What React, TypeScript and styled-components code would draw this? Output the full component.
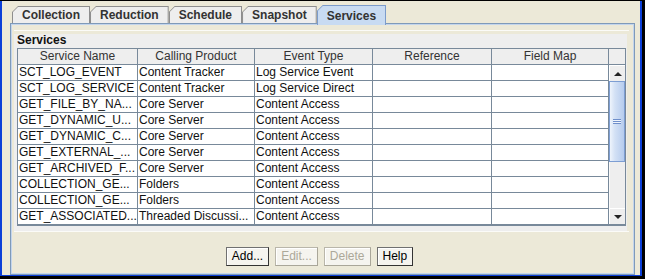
import React from 'react'
import styled, { createGlobalStyle } from 'styled-components'

const GlobalStyle = createGlobalStyle`
  html, body {
    margin: 0;
    padding: 0;
    background: #ece9d8;
  }
  body {
    font-family: "Liberation Sans", Arial, sans-serif;
  }
`

const GRID = '#78899a'

const Window = styled.div`
  width: 645px;
  height: 279px;
  box-sizing: border-box;
  border-top: 1px solid #000;
  border-right: 3px solid #000;
  border-bottom: 3px solid #000;
  background: #ece9d8;
`

const Frame = styled.div`
  height: 100%;
  box-sizing: border-box;
  border-left: 2px solid #0b3fd8;
  border-right: 2px solid #0b3fd8;
  border-bottom: 1px solid #0b3fd8;
  padding: 4px 5px 0 8px;
  display: flex;
  flex-direction: column;
`

const TabRow = styled.div`
  display: flex;
  align-items: flex-end;
  height: 18px;
  padding-left: 2px;
`

const Tab = styled.div<{ $active?: boolean }>`
  position: relative;
  z-index: ${p => (p.$active ? 1 : 0)};
  height: ${p => (p.$active ? 20 : 17)}px;
  margin-bottom: ${p => (p.$active ? -2 : 0)}px;
  box-sizing: border-box;
  padding: 1px 1px 0 1px;
  background: ${p => (p.$active ? '#7c9ccb' : '#8e8e8e')};
  clip-path: polygon(0 6px, 6px 0, 100% 0, 100% 100%, 0 100%);
`

const TabFace = styled.div<{ $active?: boolean }>`
  height: 100%;
  box-sizing: border-box;
  padding: 0 9px;
  display: flex;
  align-items: center;
  background: ${p => (p.$active ? '#c8dbf2' : '#eeeeee')};
  clip-path: polygon(0 5px, 5px 0, 100% 0, 100% 100%, 0 100%);
  font-size: 12px;
  font-weight: bold;
  color: #333;
  white-space: nowrap;
`

const Panel = styled.div`
  flex: 1;
  box-sizing: border-box;
  border: 1px solid #7f9ab9;
  box-shadow: inset 1px 1px 0 #c3d5ec, inset -1px -1px 0 #c3d5ec;
  padding: 6px 5px 0 3px;
  display: flex;
  flex-direction: column;
`

const GroupArea = styled.div`
  border-top: 1px solid #fbfbf8;
  border-bottom: 1px solid #fbfbf8;
  padding-top: 3px;
`

const GroupBox = styled.div`
  margin-right: 2px;
  background: #eeeeee;
  padding: 0 1px 5px 3px;
`

const GroupTitle = styled.div`
  height: 14px;
  line-height: 13px;
  font-size: 12px;
  font-weight: bold;
  color: #111;
`

const Table = styled.div`
  border: 1px solid ${GRID};
  border-bottom-width: 2px;
  background: #fff;
`

const HeaderRow = styled.div`
  display: flex;
  height: 15px;
  border-bottom: 1px solid ${GRID};
  background: #eeeeee;
`

const HeaderCell = styled.div<{ $w: number }>`
  width: ${p => p.$w}px;
  box-sizing: border-box;
  border-right: 1px solid ${GRID};
  font-size: 12px;
  line-height: 14px;
  color: #333;
  text-align: center;
  white-space: nowrap;
  overflow: hidden;
`

const Corner = styled.div`
  width: 16px;
  background: #eeeeee;
`

const Body = styled.div`
  display: flex;
`

const Rows = styled.div`
  display: flex;
  flex-direction: column;
`

const Row = styled.div`
  display: flex;
  height: 16px;
  box-sizing: border-box;
  border-bottom: 1px solid ${GRID};
  &:last-child {
    border-bottom: none;
    height: 15px;
  }
`

const Cell = styled.div<{ $w: number }>`
  width: ${p => p.$w}px;
  box-sizing: border-box;
  border-right: 1px solid ${GRID};
  padding: 0 1px;
  font-size: 12px;
  line-height: 15px;
  color: #111;
  white-space: nowrap;
  overflow: hidden;
`

const ScrollBar = styled.div`
  width: 16px;
  display: flex;
  flex-direction: column;
  background: #eeeeee;
`

const ArrowButton = styled.div<{ $down?: boolean }>`
  height: 16px;
  box-sizing: border-box;
  border-top: 1px solid #fff;
  border-left: 1px solid #fff;
  display: flex;
  align-items: center;
  justify-content: center;
  background: #eeeeee;
  &::after {
    content: '';
    width: 0;
    height: 0;
    border-left: 4px solid transparent;
    border-right: 4px solid transparent;
    ${p => (p.$down ? 'border-top: 4px solid #222;' : 'border-bottom: 4px solid #222;')}
  }
`

const Thumb = styled.div`
  height: 81px;
  box-sizing: border-box;
  border: 1px solid #7d9ed3;
  background: linear-gradient(90deg, #eef4fc 0%, #d3e1f5 35%, #b6ccee 100%);
  display: flex;
  align-items: center;
  justify-content: center;
`

const Grip = styled.div`
  width: 8px;
  height: 5px;
  background: repeating-linear-gradient(180deg, #6f8fcb 0 1px, #eef4fc 1px 2px);
`

const Track = styled.div`
  flex: 1;
  border-left: 1px solid #fafafa;
  background: #eeeeee;
`

const ButtonRow = styled.div`
  display: flex;
  justify-content: center;
  gap: 6px;
  margin-top: 15px;
  padding-right: 4px;
`

const Button = styled.button<{ $disabled?: boolean }>`
  height: 19px;
  box-sizing: border-box;
  padding: 0 5px;
  margin: 0;
  font-family: "Liberation Sans", Arial, sans-serif;
  font-size: 12px;
  line-height: 15px;
  color: ${p => (p.$disabled ? '#aca899' : '#000')};
  background: #f5f4ef;
  border: 1px solid ${p => (p.$disabled ? '#b9b6aa' : '#707070')};
  border-right-color: ${p => (p.$disabled ? '#a9a699' : '#333')};
  border-bottom-color: ${p => (p.$disabled ? '#a9a699' : '#333')};
  box-shadow: inset 1px 1px 0 #fff;
  border-radius: 0;
`

const COLUMNS: Array<{ title: string, width: number }> = [
  { title: 'Service Name', width: 120 },
  { title: 'Calling Product', width: 117 },
  { title: 'Event Type', width: 118 },
  { title: 'Reference', width: 119 },
  { title: 'Field Map', width: 117 },
]

const SERVICES: Array<[string, string, string]> = [
  ['SCT_LOG_EVENT', 'Content Tracker', 'Log Service Event'],
  ['SCT_LOG_SERVICE', 'Content Tracker', 'Log Service Direct'],
  ['GET_FILE_BY_NA...', 'Core Server', 'Content Access'],
  ['GET_DYNAMIC_U...', 'Core Server', 'Content Access'],
  ['GET_DYNAMIC_C...', 'Core Server', 'Content Access'],
  ['GET_EXTERNAL_...', 'Core Server', 'Content Access'],
  ['GET_ARCHIVED_F...', 'Core Server', 'Content Access'],
  ['COLLECTION_GE...', 'Folders', 'Content Access'],
  ['COLLECTION_GE...', 'Folders', 'Content Access'],
  ['GET_ASSOCIATED...', 'Threaded Discussi...', 'Content Access'],
]

const TABS = ['Collection', 'Reduction', 'Schedule', 'Snapshot', 'Services']

export default function App() {
  return (
    <>
      <GlobalStyle />
      <Window>
        <Frame>
          <TabRow>
            {TABS.map(tab => (
              <Tab key={tab} $active={tab === 'Services'}>
                <TabFace $active={tab === 'Services'}>{tab}</TabFace>
              </Tab>
            ))}
          </TabRow>
          <Panel>
            <GroupArea>
              <GroupBox>
                <GroupTitle>Services</GroupTitle>
                <Table>
                  <HeaderRow>
                    {COLUMNS.map(col => (
                      <HeaderCell key={col.title} $w={col.width}>{col.title}</HeaderCell>
                    ))}
                    <Corner />
                  </HeaderRow>
                  <Body>
                    <Rows>
                      {SERVICES.map((row, i) => (
                        <Row key={i}>
                          {COLUMNS.map((col, j) => (
                            <Cell key={col.title} $w={col.width}>{row[j] ?? ''}</Cell>
                          ))}
                        </Row>
                      ))}
                    </Rows>
                    <ScrollBar>
                      <ArrowButton />
                      <Thumb><Grip /></Thumb>
                      <Track />
                      <ArrowButton $down />
                    </ScrollBar>
                  </Body>
                </Table>
              </GroupBox>
            </GroupArea>
            <ButtonRow>
              <Button>Add...</Button>
              <Button $disabled>Edit...</Button>
              <Button $disabled>Delete</Button>
              <Button>Help</Button>
            </ButtonRow>
          </Panel>
        </Frame>
      </Window>
    </>
  )
}
